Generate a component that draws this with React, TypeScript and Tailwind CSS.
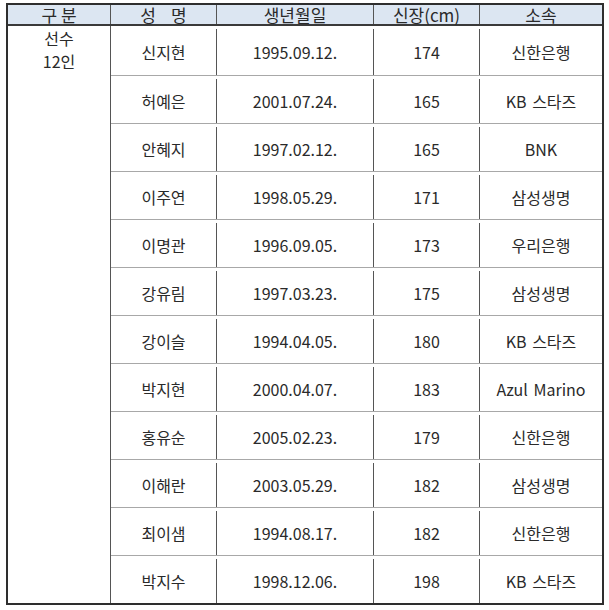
import React from "react";

const rows = [
  ["신지현", "1995.09.12.", "174", "신한은행"],
  ["허예은", "2001.07.24.", "165", "KB 스타즈"],
  ["안혜지", "1997.02.12.", "165", "BNK"],
  ["이주연", "1998.05.29.", "171", "삼성생명"],
  ["이명관", "1996.09.05.", "173", "우리은행"],
  ["강유림", "1997.03.23.", "175", "삼성생명"],
  ["강이슬", "1994.04.05.", "180", "KB 스타즈"],
  ["박지현", "2000.04.07.", "183", "Azul Marino"],
  ["홍유순", "2005.02.23.", "179", "신한은행"],
  ["이해란", "2003.05.29.", "182", "삼성생명"],
  ["최이샘", "1994.08.17.", "182", "신한은행"],
  ["박지수", "1998.12.06.", "198", "KB 스타즈"],
];

export default function App() {
  return (
    <div
      className="w-[609px] h-[610px] bg-white pl-[6px] pt-[3px] text-[16px] text-[#2a2a2a]"
      style={{ fontFamily: '"Noto Sans CJK KR", "Noto Sans", sans-serif' }}
    >
      <div className="w-[598px] border-2 border-[#2e2e2e] flex flex-col">
        <div className="flex h-[21px] bg-[#dce6f2] border-b-2 border-[#3a3a3a] leading-none text-[17px]">
          <div className="w-[103px] border-r border-[#555] flex items-center justify-center whitespace-pre">구 분</div>
          <div className="w-[106px] border-r border-[#555] flex items-center justify-center whitespace-pre">성    명</div>
          <div className="w-[157px] border-r border-[#555] flex items-center justify-center">생년월일</div>
          <div className="w-[106px] border-r border-[#555] flex items-center justify-center">신장(cm)</div>
          <div className="w-[122px] flex items-center justify-center">소속</div>
        </div>
        <div className="flex">
          <div className="w-[103px] border-r border-[#555] flex flex-col items-center leading-[23px] pt-[1px]">
            <span>선수</span>
            <span>12인</span>
          </div>
          <div className="flex flex-col">
            {rows.map((r, i) => (
              <div
                key={i}
                className={`flex pt-[3px] ${
                  i === 0
                    ? "h-[50px] border-b border-[#a8a8a8]"
                    : i === rows.length - 1
                    ? "h-[47px]"
                    : "h-[48px] border-b border-[#a8a8a8]"
                }`}
              >
                <div className="w-[106px] border-r border-[#555] flex items-center justify-center">{r[0]}</div>
                <div className="w-[157px] border-r border-[#555] flex items-center justify-center">{r[1]}</div>
                <div className="w-[106px] border-r border-[#555] flex items-center justify-center">{r[2]}</div>
                <div className="w-[122px] flex items-center justify-center whitespace-pre [word-spacing:2px]">{r[3]}</div>
              </div>
            ))}
          </div>
        </div>
      </div>
    </div>
  );
}
